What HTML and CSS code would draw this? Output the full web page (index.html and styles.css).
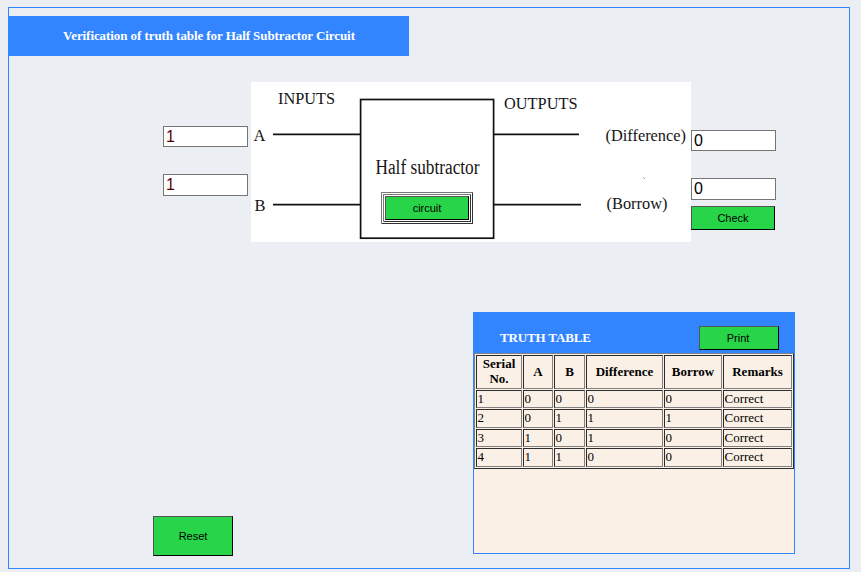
FILE: index.html
```html
<!DOCTYPE html>
<html lang="en">
<head>
<meta charset="utf-8">
<title>Half Subtractor Circuit</title>
<link rel="stylesheet" href="styles.css">
</head>
<body>
<main class="frame">
  <h1 class="banner">Verification of truth table for Half Subtractor Circuit</h1>
  <section class="experiment">
    <div class="inputs">
      <input class="field" type="text" value="1" aria-label="A">
      <input class="field second" type="text" value="1" aria-label="B">
    </div>
    <div class="diagram">
      <svg width="440" height="160" viewBox="0 0 440 160">
        <g fill="none" stroke="#111" stroke-width="1.7">
          <rect x="109.6" y="17.5" width="133" height="138.7"/>
          <path d="M22 52.3H110M22 122.7H110M243 52.3H328M243 122.7H330"/>
        </g>
        <path d="M392 95l2 2" stroke="#888" stroke-width=".8"/>
        <g class="labels">
          <text x="27" y="22" textLength="57" lengthAdjust="spacingAndGlyphs">INPUTS</text>
          <text x="253" y="27" textLength="73.5" lengthAdjust="spacingAndGlyphs">OUTPUTS</text>
          <text x="2.5" y="59" textLength="12" lengthAdjust="spacingAndGlyphs">A</text>
          <text x="3.5" y="129" textLength="11" lengthAdjust="spacingAndGlyphs">B</text>
          <text x="354.5" y="59" textLength="80.5" lengthAdjust="spacingAndGlyphs">(Difference)</text>
          <text x="355.5" y="127" textLength="61" lengthAdjust="spacingAndGlyphs">(Borrow)</text>
          <text class="name" x="124.5" y="92" textLength="104" lengthAdjust="spacingAndGlyphs">Half subtractor</text>
        </g>
      </svg>
      <div class="circuit-ring"><button class="btn circuit">circuit</button></div>
    </div>
    <div class="outputs">
      <input class="field" type="text" value="0" aria-label="Difference">
      <input class="field second" type="text" value="0" aria-label="Borrow">
      <button class="btn check">Check</button>
    </div>
  </section>
  <section class="results">
    <button class="btn reset">Reset</button>
    <div class="panel">
      <header class="panel-head"><h2>TRUTH TABLE</h2><button class="btn print">Print</button></header>
      <table>
        <colgroup><col class="c1"><col class="c2"><col class="c3"><col class="c4"><col class="c5"><col class="c6"></colgroup>
        <tr class="head"><th>Serial No.</th><th>A</th><th>B</th><th>Difference</th><th>Borrow</th><th>Remarks</th></tr>
        <tr><td>1</td><td>0</td><td>0</td><td>0</td><td>0</td><td>Correct</td></tr>
        <tr class="tall"><td>2</td><td>0</td><td>1</td><td>1</td><td>1</td><td>Correct</td></tr>
        <tr><td>3</td><td>1</td><td>0</td><td>1</td><td>0</td><td>Correct</td></tr>
        <tr class="tall"><td>4</td><td>1</td><td>1</td><td>0</td><td>0</td><td>Correct</td></tr>
      </table>
    </div>
  </section>
</main>
</body>
</html>
```
FILE: styles.css
```css
* { box-sizing: border-box; }
body { margin: 0; padding: 7px 0 0 8px; background: #ebeff4; font-family: "Liberation Serif", serif; overflow: hidden; }
.frame { width: 842px; height: 562px; border: 1px solid #3385ff; padding-top: 8px; }
.banner { margin: 0; width: 400px; height: 40px; background: #3385ff; color: #fff; font-size: 13px; line-height: 40px; letter-spacing: -0.075px; text-align: center; }
.experiment { display: flex; height: 160px; margin: 26px 0 0 154px; }
.inputs { width: 88px; padding-top: 44px; }
.outputs { width: 85px; padding-top: 48px; }
.field { display: block; width: 85px; height: 21px; padding: 1px 2px; border: 1px solid #767676; border-radius: 0; background: #fff; font: 16px "Liberation Sans", sans-serif; color: #000; }
.inputs .field { color: #500; }
.field.second { height: 22px; margin-top: 27px; }
.diagram { position: relative; width: 440px; height: 160px; background: #fff; }
.diagram svg { display: block; }
.labels { font-family: "Liberation Serif", serif; font-size: 16.5px; fill: #151515; }
.labels .name { font-size: 20px; }
.btn { display: block; margin: 0; padding: 0; background: #28d548; color: #000; border: 1px solid; border-color: #555 #000 #000 #555; border-radius: 0; font: 11px "Liberation Sans", sans-serif; }
.circuit-ring { position: absolute; left: 130px; top: 110px; width: 92px; height: 32px; padding: 1px; border: 3px double; border-color: #777 #333 #333 #777; }
.circuit { width: 84px; height: 24px; }
.check { width: 84px; height: 24px; margin-top: 6px; }
.results { display: flex; margin: 70px 0 0 144px; }
.reset { width: 80px; height: 40px; margin: 204px 240px 0 0; }
.panel { width: 322px; height: 242px; border: 1px solid #3385ff; background: #faf0e6; }
.panel-head { display: flex; justify-content: space-between; height: 40px; padding: 13px 15px 0 26px; background: #3385ff; color: #fff; }
.panel-head h2 { margin: 4px 0 0; font-size: 13px; line-height: 16px; letter-spacing: -0.15px; }
.print { width: 80px; height: 24px; padding-right: 2px; }
table { width: 320px; height: 116px; table-layout: fixed; border: 1px solid; border-color: #808080 #2c2c2c #2c2c2c #808080; border-spacing: 1px; font-size: 13px; line-height: 15px; }
th, td { padding: 0 1px 0 0.5px; border: 1px solid; border-color: #2c2c2c #808080 #808080 #2c2c2c; text-align: left; vertical-align: top; }
th { padding: 0 1px 2px; text-align: center; vertical-align: middle; line-height: 15px; }
tr { height: 18px; }
.tall { height: 19px; }
.head { height: 34px; }
.c1 { width: 46px; }
.c2 { width: 30px; }
.c3 { width: 31px; }
.c4 { width: 77px; }
.c5 { width: 58px; }
.c6 { width: 69px; }
```
